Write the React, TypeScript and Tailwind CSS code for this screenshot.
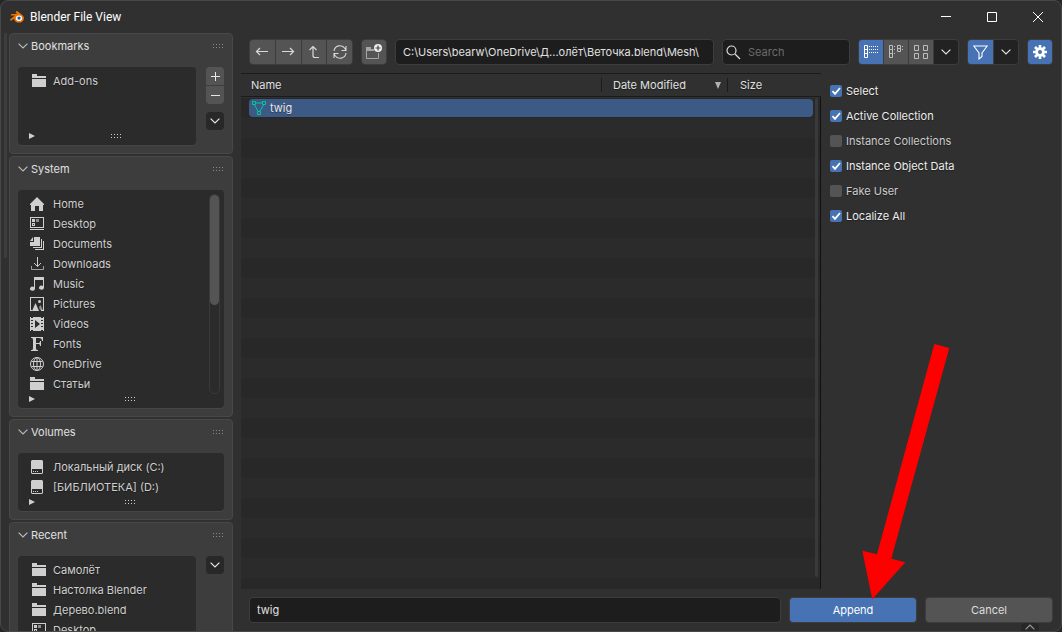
import { useState } from "react";
import type { ReactNode } from "react";

type IconName =
  | "folder"
  | "home"
  | "desktop"
  | "documents"
  | "downloads"
  | "music"
  | "pictures"
  | "videos"
  | "fonts"
  | "globe"
  | "disk";

type Place = { icon: IconName; label: string };

const bookmarks: Place[] = [{ icon: "folder", label: "Add-ons" }];

const system: Place[] = [
  { icon: "home", label: "Home" },
  { icon: "desktop", label: "Desktop" },
  { icon: "documents", label: "Documents" },
  { icon: "downloads", label: "Downloads" },
  { icon: "music", label: "Music" },
  { icon: "pictures", label: "Pictures" },
  { icon: "videos", label: "Videos" },
  { icon: "fonts", label: "Fonts" },
  { icon: "globe", label: "OneDrive" },
  { icon: "folder", label: "Статьи" },
];

const volumes: Place[] = [
  { icon: "disk", label: "Локальный диск (C:)" },
  { icon: "disk", label: "[БИБЛИОТЕКА] (D:)" },
];

const recent: Place[] = [
  { icon: "folder", label: "Самолёт" },
  { icon: "folder", label: "Настолка Blender" },
  { icon: "folder", label: "Дерево.blend" },
  { icon: "desktop", label: "Desktop" },
];

const defaultOptions = [
  { label: "Select", checked: true },
  { label: "Active Collection", checked: true },
  { label: "Instance Collections", checked: false },
  { label: "Instance Object Data", checked: true },
  { label: "Fake User", checked: false },
  { label: "Localize All", checked: true },
];

const placeIcons: Record<IconName, ReactNode> = {
  folder: <path d="M0 0h5v2h9v2H0zM0 5h14v8H0z" />,
  home: <path d="M7 0l7 7v1h-1v6H9v-5H5v5H1V8H0V7z" />,
  desktop: (
    <>
      <path fillRule="evenodd" d="M0 0h14v11H0zM1 1v9h12V1z" />
      <path d="M0 12h14v1H0zM2 2h3v3H2z" />
      <path d="M6 2h3v3H6z" opacity=".6" />
      <path fillRule="evenodd" d="M2 6h3v3H2zM3 7v1h1V7z" />
    </>
  ),
  documents: (
    <>
      <path d="M4 0h6v9H0V5h4zM3 0v4H0z" />
      <path d="M11 2h1v9H3v-1h8zM13 4h1v9H5v-1h8z" />
    </>
  ),
  downloads: (
    <>
      <path d="M7.500 0v9.500M4 6l3.500 3.500L11 6" fill="none" stroke="currentColor" />
      <path d="M1.500 9v3.500h12V9" fill="none" stroke="currentColor" opacity=".7" />
    </>
  ),
  music: (
    <path d="M4 0h10v11a2.500 2 0 1 1-1-2V3H5v9a2.500 2 0 1 1-1-2z" />
  ),
  pictures: (
    <>
      <path d="M0 0h14v14h-3v-1h2V1H1v12h1v1H0z" />
      <path d="M2 14l3.500-8L9 14z" />
      <circle cx="9.500" cy="4.500" r="1.500" />
      <path d="M9 10l1.500-2 2.500 5H10z" opacity=".6" />
    </>
  ),
  videos: (
    <path
      fillRule="evenodd"
      d="M0 0h1v1h2V0h8v1h2V0h1v14h-1v-1h-2v1H3v-1H1v1H0zM1 3v1h2V3zM1 6v1h2V6zM1 9v1h2V9zM11 3v1h2V3zM11 6v1h2V6zM11 9v1h2V9zM5 3v8l5-4z"
    />
  ),
  fonts: <path d="M1 0h12v4h-1c0-2-1-3-3-3H6v5h2c1 0 2 0 2-2h1v5h-1c0-2-1-2-2-2H6v4c0 2 1 2 2 2v1H1v-1c1 0 2 0 2-2V3c0-2-1-2-2-2z" />,
  globe: (
    <g fill="none" stroke="currentColor">
      <circle cx="7" cy="7" r="6.500" />
      <ellipse cx="7" cy="7" rx="3.500" ry="6.500" />
      <path d="M7 0v14M1.500 4.500h11M1.500 9.500h11" />
    </g>
  ),
  disk: (
    <path
      fillRule="evenodd"
      d="M2 0h10l1 1v12l-1 1H2l-1-1V1zM2 9v4h10V9zM3 11h1v1H3zM5 11h1v1H5zM7 11h1v1H7z"
    />
  ),
};

const Chevron = ({ className = "" }: { className?: string }) => (
  <svg width="10" height="6" viewBox="0 0 10 6" fill="none" stroke="currentColor" strokeWidth="1.2" className={className} aria-hidden>
    <path d="M.6.600L5 5 9.400.600" />
  </svg>
);

const Grip = ({ className = "" }: { className?: string }) => (
  <svg width="10" height="4" viewBox="0 0 10 4" fill="currentColor" className={className} aria-hidden>
    <path d="M0 0h1v1H0zM3 0h1v1H3zM6 0h1v1H6zM9 0h1v1H9zM0 3h1v1H0zM3 3h1v1H3zM6 3h1v1H6zM9 3h1v1H9z" />
  </svg>
);

const BlenderLogo = () => (
  <svg width="14" height="12" viewBox="0 0 14 12" aria-hidden>
    <path
      d="M6.200.400c.5-.5 1.100-.4 1.600 0l4.700 3.800c2 1.700 1.900 4.600-.1 6.200-1.900 1.600-5 1.600-6.900 0-.9-.8-1.400-1.800-1.400-2.800L1.500 9.400C.5 10.100-.5 9 .4 8.200L5 4.600H1.800c-1.100 0-1.100-1.400 0-1.500h5.400L6 2c-.5-.4-.4-1 .2-1.600z"
      fill="#ea7600"
    />
    <ellipse cx="9" cy="7.200" rx="3.100" ry="2.800" fill="#fff" />
    <circle cx="9" cy="7.100" r="1.700" fill="#1f5f9e" />
  </svg>
);

const PlaceList = ({ items, inset = false, footer = true, children }: { items: Place[]; inset?: boolean; footer?: boolean; children?: ReactNode }) => (
  <div className="relative flex min-w-0 flex-1 flex-col rounded bg-[#2b2b2b] py-1 shadow-[0_1px_0_#464646]">
    <ul>
      {items.map((item) => (
        <li key={item.label}>
          <a href="#" className={`flex h-5 items-center ${inset ? "gap-[7px] pl-[14px]" : "gap-[9px] pl-3"}`}>
            <svg width="14" height="14" viewBox="0 0 14 14" fill="currentColor" className="shrink-0" aria-hidden>
              {placeIcons[item.icon]}
            </svg>
            <span className="truncate">{item.label}</span>
          </a>
        </li>
      ))}
    </ul>
    {footer && (
      <div className="mt-auto flex h-[10px] items-center pl-[11px]">
        <svg width="6" height="6" viewBox="0 0 6 6" fill="currentColor" aria-hidden>
          <path d="M0 0l6 3-6 3z" />
        </svg>
        <Grip className="mx-auto" />
      </div>
    )}
    {children}
  </div>
);

const Panel = ({ title, children }: { title: string; children: ReactNode }) => (
  <section className="shrink-0 rounded border border-[#484848] bg-[#3d3d3d] px-2 pb-2">
    <h2>
      <button type="button" className="flex h-6 w-full items-center gap-[3px] pr-px text-[#e0e0e0]">
        <Chevron className="text-[#b8b8b8]" />
        {title}
        <Grip className="ml-auto text-[#8a8a8a]" />
      </button>
    </h2>
    <div className="mt-[9px] flex gap-[10px]">{children}</div>
  </section>
);

const smallButton = "flex h-[18px] w-[18px] items-center justify-center text-[#e6e6e6]";

const MenuButton = ({ label }: { label: string }) => (
  <button type="button" aria-label={label} className={`${smallButton} rounded bg-[#282828]`}>
    <Chevron />
  </button>
);

const ToolButton = ({ label, active = false, dark = false, children }: { label: string; active?: boolean; dark?: boolean; children: ReactNode }) => (
  <button
    type="button"
    aria-label={label}
    className={`flex h-6 flex-1 items-center justify-center ${
      active ? "bg-[#4772b3] text-white" : dark ? "bg-[#222222] text-[#e0e0e0]" : "bg-[#545454] text-[#d8d8d8]"
    }`}
  >
    {children}
  </button>
);

const groupClass = "flex shrink-0 gap-px overflow-hidden rounded border border-[#3d3d3d] bg-[#3d3d3d]";
const fieldClass = "h-[26px] min-w-0 rounded border border-[#3d3d3d] bg-[#1d1d1d] text-[#e0e0e0] outline-none";

const Toolbar = () => (
  <div className="flex gap-2 px-2 pt-[6px] pb-2">
    <div className={`${groupClass} w-[104px]`}>
      <ToolButton label="Back">
        <svg width="14" height="14" viewBox="0 0 14 14" fill="none" stroke="currentColor" strokeWidth="1.2">
          <path d="M13 6.500H1.500M5 3L1.500 6.500 5 10" />
        </svg>
      </ToolButton>
      <ToolButton label="Forward">
        <svg width="14" height="14" viewBox="0 0 14 14" fill="none" stroke="currentColor" strokeWidth="1.2">
          <path d="M1 6.500h11.500M9 3l3.500 3.500L9 10" />
        </svg>
      </ToolButton>
      <ToolButton label="Parent Directory">
        <svg width="14" height="14" viewBox="0 0 14 14" fill="none" stroke="currentColor" strokeWidth="1.2">
          <path d="M2.500 5L6 1.500 9.500 5M6 1.500v9c0 1.500.5 2 2 2h4" />
        </svg>
      </ToolButton>
      <ToolButton label="Refresh">
        <svg width="14" height="14" viewBox="0 0 14 14" fill="none" stroke="currentColor" strokeWidth="1.1">
          <path d="M1 6a6 6 0 0 1 11-2.500L13 5.500M13 1v4.500H8.500M13 8a6 6 0 0 1-11 2.500L1 8.500M1 13V8.500h4.500" />
        </svg>
      </ToolButton>
    </div>

    <div className={`${groupClass} w-[26px]`}>
      <ToolButton label="Create New Directory">
        <svg width="16" height="16" viewBox="0 0 16 16">
          <path d="M.5 3.500V14.500h12V9M.5 6.500H8" fill="none" stroke="#a5a5a5" />
          <path d="M0 3h5v2h3v2H0z" fill="#a5a5a5" />
          <circle cx="12" cy="4" r="4" fill="#f0f0f0" />
          <path d="M12 1.500v5M9.500 4h5" stroke="#444" strokeWidth="1.2" />
        </svg>
      </ToolButton>
    </div>

    <input
      aria-label="Directory"
      defaultValue={"C:\\Users\\bearw\\OneDrive\\Д...олёт\\Веточка.blend\\Mesh\\"}
      className={`${fieldClass} flex-1 px-[7px]`}
    />

    <div className="relative w-32 shrink-0">
      <svg width="15" height="15" viewBox="0 0 15 15" fill="none" stroke="#dcdcdc" strokeWidth="1.2" className="absolute top-[6px] left-1" aria-hidden>
        <circle cx="5.500" cy="5.500" r="4.500" />
        <path d="M9 9l5 5" />
      </svg>
      <input aria-label="Search" placeholder="Search" className={`${fieldClass} w-full pr-2 pl-[25px] placeholder:text-[#6b6b6b]`} />
    </div>

    <div className={`${groupClass} w-[101px]`}>
      <ToolButton label="Vertical List" active>
        <svg width="16" height="14" viewBox="0 0 16 14" fill="none" stroke="currentColor">
          <path d="M1.500.5h3v12h-3zM1.500 4.500h3M1.500 8.500h3" />
          <path d="M6 1.500h10M6 4.500h10M6 7.500h10" strokeDasharray="1 1" />
        </svg>
      </ToolButton>
      <ToolButton label="Horizontal List">
        <svg width="16" height="14" viewBox="0 0 16 14" fill="none" stroke="currentColor" opacity=".8">
          <path d="M1.500.5h3v12h-3zM1.500 4.500h3M1.500 8.500h3M9.500.5h3v6h-3zM9.500 3.500h3" />
          <path d="M6 1.500h2M6 4.500h2M6 8.500h2M14 1.500h2M14 4.500h2" strokeDasharray="1 1" />
        </svg>
      </ToolButton>
      <ToolButton label="Thumbnails">
        <svg width="16" height="14" viewBox="0 0 16 14" fill="none" stroke="currentColor" opacity=".8">
          <path d="M1.500.5h4v5h-4zM10.500.5h4v5h-4zM1.500 8.500h4v5h-4zM10.500 8.500h4v5h-4z" />
        </svg>
      </ToolButton>
      <ToolButton label="Display Settings" dark>
        <Chevron />
      </ToolButton>
    </div>

    <div className={`${groupClass} w-[52px]`}>
      <ToolButton label="Filter" active>
        <svg width="15" height="15" viewBox="0 0 15 15" fill="none" stroke="currentColor" strokeWidth="1.1">
          <path d="M.8 1h13.400L9 8v3.500L6 14V8z" />
        </svg>
      </ToolButton>
      <ToolButton label="Filter Settings" dark>
        <Chevron />
      </ToolButton>
    </div>

    <div className={`${groupClass} w-[26px]`}>
      <ToolButton label="Toggle Options" active>
        <svg width="14" height="14" viewBox="0 0 14 14">
          <g stroke="currentColor" strokeWidth="2.6">
            <path d="M7 0v14M0 7h14M2 2l10 10M12 2L2 12" />
          </g>
          <circle cx="7" cy="7" r="4.800" fill="currentColor" />
          <circle cx="7" cy="7" r="2" fill="#4772b3" />
        </svg>
      </ToolButton>
    </div>
  </div>
);

const FileTable = () => (
  <div className="relative min-w-0 flex-1 bg-[repeating-linear-gradient(#282828_0_20px,#2b2b2b_20px_40px)] bg-[position:0_25px] bg-no-repeat">
    <table className="w-full table-fixed border-separate border-spacing-0 text-left">
      <colgroup>
        <col />
        <col className="w-[127px]" />
        <col className="w-[93px]" />
      </colgroup>
      <thead>
        <tr className="text-[#e0e0e0]">
          <th className="h-6 border-y border-[#1b1b1b] bg-[#303030] p-0 pl-[10px] font-normal">Name</th>
          <th className="border-y border-[#1b1b1b] bg-[#303030] p-0 font-normal">
            <div className="flex h-[14px] items-center justify-between border-x border-[#1b1b1b] pr-[6px] pl-[11px]">
              Date Modified
              <svg width="6" height="7" viewBox="0 0 6 7" fill="#b0b0b0" aria-hidden>
                <path d="M0 0h6L3 7z" />
              </svg>
            </div>
          </th>
          <th className="border-y border-[#1b1b1b] bg-[#303030] p-0 pl-3 font-normal">Size</th>
        </tr>
      </thead>
      <tbody>
        <tr className="text-[#e8e8e8]">
          <td className="pt-[2px] pr-0 pb-0 pl-2">
            <div className="flex h-[18px] items-center gap-1 rounded-l bg-[#3d5a87] pl-[3px]">
              <svg width="14" height="14" viewBox="0 0 14 14" fill="none" stroke="#00c99a" aria-hidden>
                <path d="M.5.500h3v3h-3zM10.500.500h3v3h-3zM5.500 10.500h3v3h-3zM4 2h6M2.500 4l3.500 6M11.500 4L8 10" />
              </svg>
              twig
            </div>
          </td>
          <td className="px-0 pt-[2px] pb-0">
            <div className="h-[18px] bg-[#3d5a87]" />
          </td>
          <td className="pt-[2px] pr-2 pb-0 pl-0">
            <div className="h-[18px] rounded-r bg-[#3d5a87]" />
          </td>
        </tr>
      </tbody>
    </table>
    {/* scrollbar track */}
    <div className="absolute top-[25px] right-[3px] bottom-3 w-[3px] rounded-full bg-[#393939]" />
    <div className="absolute top-6 right-0 bottom-0 w-px bg-[#111111]" />
  </div>
);

const Options = () => {
  const [options, setOptions] = useState(defaultOptions);

  const toggle = (label: string) =>
    setOptions(options.map((o) => (o.label === label ? { ...o, checked: !o.checked } : o)));

  return (
    <div className="flex w-60 shrink-0 flex-col gap-[5px] pt-2 pl-[9px]">
      {options.map((option) => (
        <label key={option.label} className={`flex h-5 items-center gap-1 ${option.checked ? "text-[#eeeeee]" : "text-[#cccccc]"}`}>
          <span className="grid h-3 w-3">
            <input
              type="checkbox"
              checked={option.checked}
              onChange={() => toggle(option.label)}
              className="col-start-1 row-start-1 h-3 w-3 appearance-none rounded-xs bg-[#545454] checked:bg-[#4772b3]"
            />
            {option.checked && (
              <svg viewBox="0 0 12 12" fill="none" stroke="#fff" strokeWidth="1.8" className="pointer-events-none col-start-1 row-start-1 h-3 w-3" aria-hidden>
                <path d="M2.500 6.200L5 8.800 10 3" />
              </svg>
            )}
          </span>
          {option.label}
        </label>
      ))}
    </div>
  );
};

const App = () => {
  return (
    <div className="h-screen bg-[#262626] font-['Inter',sans-serif] text-[11px] leading-[14px] text-[#cfcfcf] [text-shadow:0_1px_1px_rgba(0,0,0,0.4)]">
      <div className="relative flex h-full flex-col overflow-hidden rounded-lg border border-[#484848] bg-[#303030]">
        <header className="flex h-8 shrink-0 items-center pl-[9px] text-white">
          <BlenderLogo />
          <h1 className="ml-[6px] font-['Roboto',sans-serif] text-xs leading-4 [text-shadow:none]">Blender File View</h1>
          <div className="ml-auto flex h-full">
            <button type="button" aria-label="Minimize" className="flex w-[46px] items-center justify-center">
              <svg width="10" height="10" viewBox="0 0 10 10" stroke="currentColor"><path d="M0 4.500h10" /></svg>
            </button>
            <button type="button" aria-label="Maximize" className="flex w-[46px] items-center justify-center">
              <svg width="10" height="10" viewBox="0 0 10 10" fill="none" stroke="currentColor"><path d="M.5.500h9v9h-9z" /></svg>
            </button>
            <button type="button" aria-label="Close" className="flex w-[46px] items-center justify-center">
              <svg width="10" height="10" viewBox="0 0 10 10" stroke="currentColor"><path d="M0 0l10 10M10 0L0 10" /></svg>
            </button>
          </div>
        </header>

        <div className="flex min-h-0 flex-1">
          <aside className="flex w-60 shrink-0 gap-[2px] overflow-hidden pr-2 pl-[3px]">
            <div className="h-[225px] w-[3px] shrink-0 rounded-b bg-[#3d3d3d]" />
            <div className="flex min-w-0 flex-1 flex-col gap-[2px]">
              <Panel title="Bookmarks">
                <div className="flex h-[78px] min-w-0 flex-1">
                  <PlaceList items={bookmarks} inset />
                </div>
                <div className="flex flex-col">
                  <button type="button" aria-label="Add Bookmark" className={`${smallButton} mb-px rounded-t bg-[#545454]`}>
                    <svg width="9" height="9" viewBox="0 0 9 9" stroke="currentColor"><path d="M4.500 0v9M0 4.500h9" /></svg>
                  </button>
                  <button type="button" aria-label="Delete Bookmark" className={`${smallButton} mb-2 rounded-b bg-[#545454]`}>
                    <svg width="9" height="9" viewBox="0 0 9 9" stroke="currentColor"><path d="M0 4.500h9" /></svg>
                  </button>
                  <MenuButton label="Bookmark Specials" />
                </div>
              </Panel>

              <Panel title="System">
                <PlaceList items={system}>
                  <div className="absolute top-1 right-1 bottom-[14px] w-[11px] rounded-full border border-[#3a3a3a]">
                    <div className="h-[110px] rounded-full bg-[#545454]" />
                  </div>
                </PlaceList>
              </Panel>

              <Panel title="Volumes">
                <PlaceList items={volumes} />
              </Panel>

              <Panel title="Recent">
                <PlaceList items={recent} inset footer={false} />
                <MenuButton label="Recent Specials" />
              </Panel>
            </div>
          </aside>

          <main className="flex min-w-0 flex-1 flex-col">
            <Toolbar />
            <div className="flex min-h-0 flex-1">
              <FileTable />
              <Options />
            </div>
            <div className="flex gap-2 p-2">
              <input aria-label="File Name" defaultValue="twig" className={`${fieldClass} flex-1 px-[7px]`} />
              <button type="button" className="h-[26px] w-32 rounded border border-[#3d3d3d] bg-[#4772b3] text-white">
                Append
              </button>
              <button type="button" className="h-[26px] w-32 rounded border border-[#3d3d3d] bg-[#545454] text-[#dddddd]">
                Cancel
              </button>
            </div>
          </main>
        </div>

        <button type="button" aria-label="Show Region" className="absolute right-[22px] bottom-0 flex h-2 w-[18px] items-center justify-center rounded-t bg-[#272727] text-[#999999]">
          <Chevron className="rotate-180" />
        </button>

        {/* pointer to the Append button */}
        <svg width="88" height="257" viewBox="0 0 88 257" fill="#ff0000" className="pointer-events-none absolute right-[111px] bottom-[31px]" aria-hidden>
          <path d="M72.300 1L87.300 5 29.300 215.700 43.300 219.300 10.300 256.300.3 207.700 15 211.300z" />
        </svg>
      </div>
    </div>
  );
};

export default App;
